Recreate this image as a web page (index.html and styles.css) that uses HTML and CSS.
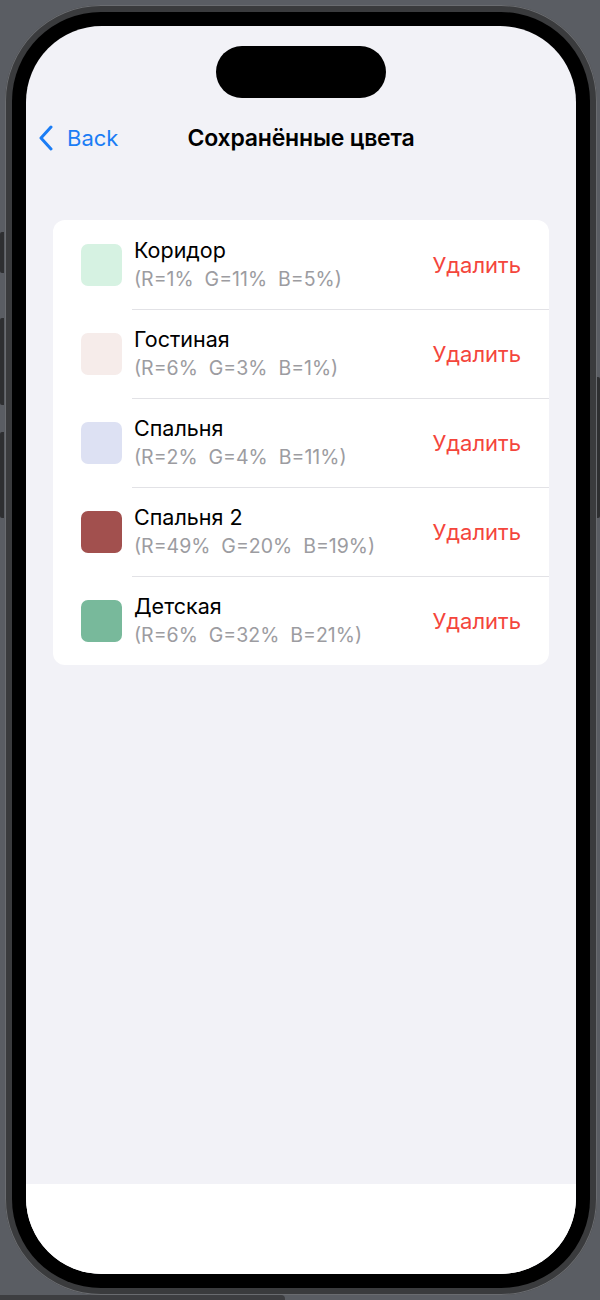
FILE: index.html
```html
<!DOCTYPE html>
<html lang="ru">
<head>
    <meta charset="UTF-8">
    <meta name="viewport" content="width=device-width, initial-scale=1.0">
    <title>Сохранённые цвета</title>
    <link rel="stylesheet" href="styles.css">
</head>
<body>
    <div class="phone">
        <span class="side-btn btn-action"></span>
        <span class="side-btn btn-vol-up"></span>
        <span class="side-btn btn-vol-down"></span>
        <span class="side-btn btn-power"></span>

        <div class="bezel">
            <div class="screen">
                <div class="island"></div>

                <div class="nav">
                    <a class="back" href="#">
                        <svg width="16" height="26" viewBox="0 0 16 26">
                            <path d="M13 2 L3 13 L13 24" fill="none" stroke="#1b7df5" stroke-width="3" stroke-linecap="round" stroke-linejoin="round"/>
                        </svg>
                        <span>Back</span>
                    </a>
                    <h1 class="title">Сохранённые цвета</h1>
                </div>

                <ul class="list">
                    <li class="row">
                        <span class="swatch" style="background-color: #d6f2e2;"></span>
                        <div class="info">
                            <div class="name">Коридор</div>
                            <div class="rgb">(R=1%&nbsp; G=11%&nbsp; B=5%)</div>
                        </div>
                        <button class="delete">Удалить</button>
                    </li>
                    <li class="row">
                        <span class="swatch" style="background-color: #f6ecea;"></span>
                        <div class="info">
                            <div class="name">Гостиная</div>
                            <div class="rgb">(R=6%&nbsp; G=3%&nbsp; B=1%)</div>
                        </div>
                        <button class="delete">Удалить</button>
                    </li>
                    <li class="row">
                        <span class="swatch" style="background-color: #dde1f3;"></span>
                        <div class="info">
                            <div class="name">Спальня</div>
                            <div class="rgb">(R=2%&nbsp; G=4%&nbsp; B=11%)</div>
                        </div>
                        <button class="delete">Удалить</button>
                    </li>
                    <li class="row">
                        <span class="swatch" style="background-color: #a2504e;"></span>
                        <div class="info">
                            <div class="name">Спальня 2</div>
                            <div class="rgb">(R=49%&nbsp; G=20%&nbsp; B=19%)</div>
                        </div>
                        <button class="delete">Удалить</button>
                    </li>
                    <li class="row">
                        <span class="swatch" style="background-color: #78b99b;"></span>
                        <div class="info">
                            <div class="name">Детская</div>
                            <div class="rgb">(R=6%&nbsp; G=32%&nbsp; B=21%)</div>
                        </div>
                        <button class="delete">Удалить</button>
                    </li>
                </ul>

                <div class="spacer"></div>
                <div class="bottom-bar"></div>
            </div>
        </div>
    </div>
    <div class="dock-bar"></div>
</body>
</html>
```

FILE: styles.css
```css
/* Общие стили */
body {
    margin: 0;
    padding: 0;
    background-color: #5a5d63;
    font-family: Inter, "Noto Sans", sans-serif;
    overflow: hidden;
}

/* Корпус телефона */
.phone {
    position: relative;
    width: 578px;
    height: 1276px;
    margin: 5px 3px 0 5px;
    padding: 7px;
    background-color: #3a3b3d;
    border-radius: 96px;
    box-shadow: inset 0 0 0 1px #6a6c70;
}

.side-btn {
    position: absolute;
    left: -5px;
    width: 4px;
    background-color: #2e2f31;
    border-radius: 2px 0 0 2px;
}

.btn-action {
    top: 227px;
    height: 41px;
}

.btn-vol-up {
    top: 313px;
    height: 87px;
}

.btn-vol-down {
    top: 427px;
    height: 86px;
}

.btn-power {
    left: auto;
    right: -3px;
    top: 372px;
    height: 141px;
    width: 3px;
    border-radius: 0 2px 2px 0;
}

.bezel {
    height: 100%;
    padding: 14px;
    box-sizing: border-box;
    background-color: #000;
    border-radius: 89px;
}

.screen {
    display: flex;
    flex-direction: column;
    height: 100%;
    background-color: #f2f2f7;
    border-radius: 76px;
    overflow: hidden;
}

.island {
    width: 170px;
    height: 52px;
    margin: 20px auto 0;
    background-color: #000;
    border-radius: 26px;
}

/* Навигация */
.nav {
    display: flex;
    align-items: center;
    justify-content: center;
    position: relative;
    height: 44px;
    margin-top: 18px;
}

.back {
    position: absolute;
    left: 12px;
    top: 0;
    height: 44px;
    display: flex;
    align-items: center;
    gap: 13px;
    color: #1b7df5;
    text-decoration: none;
    font-size: 22px;
}

.title {
    margin: 0;
    font-size: 23px;
    font-weight: 600;
    color: #000;
    letter-spacing: -0.2px;
}

/* Список цветов */
.list {
    list-style: none;
    margin: 60px 27px 0;
    padding: 0;
    background-color: #fff;
    border-radius: 12px;
}

.row {
    display: flex;
    align-items: center;
    height: 89px;
    padding: 0 28px;
    position: relative;
}

.row + .row::before {
    content: "";
    position: absolute;
    top: 0;
    left: 79px;
    right: 0;
    height: 1px;
    background-color: #e2e2e6;
}

.swatch {
    width: 41px;
    height: 42px;
    border-radius: 7px;
    flex-shrink: 0;
}

.info {
    flex: 1;
    margin-left: 12px;
}

.name {
    font-size: 21.5px;
    line-height: 26px;
    color: #000;
}

.rgb {
    margin-top: 3px;
    font-size: 19.5px;
    line-height: 26px;
    color: #9c9ca1;
}

.delete {
    border: none;
    background: none;
    padding: 0;
    font-family: inherit;
    font-size: 22px;
    color: #f4453c;
    cursor: pointer;
}

.spacer {
    flex: 1;
}

.bottom-bar {
    height: 90px;
    background-color: #fff;
}

.dock-bar {
    width: 285px;
    height: 8px;
    background-color: #3d3e41;
    border-top-right-radius: 4px;
}
```
